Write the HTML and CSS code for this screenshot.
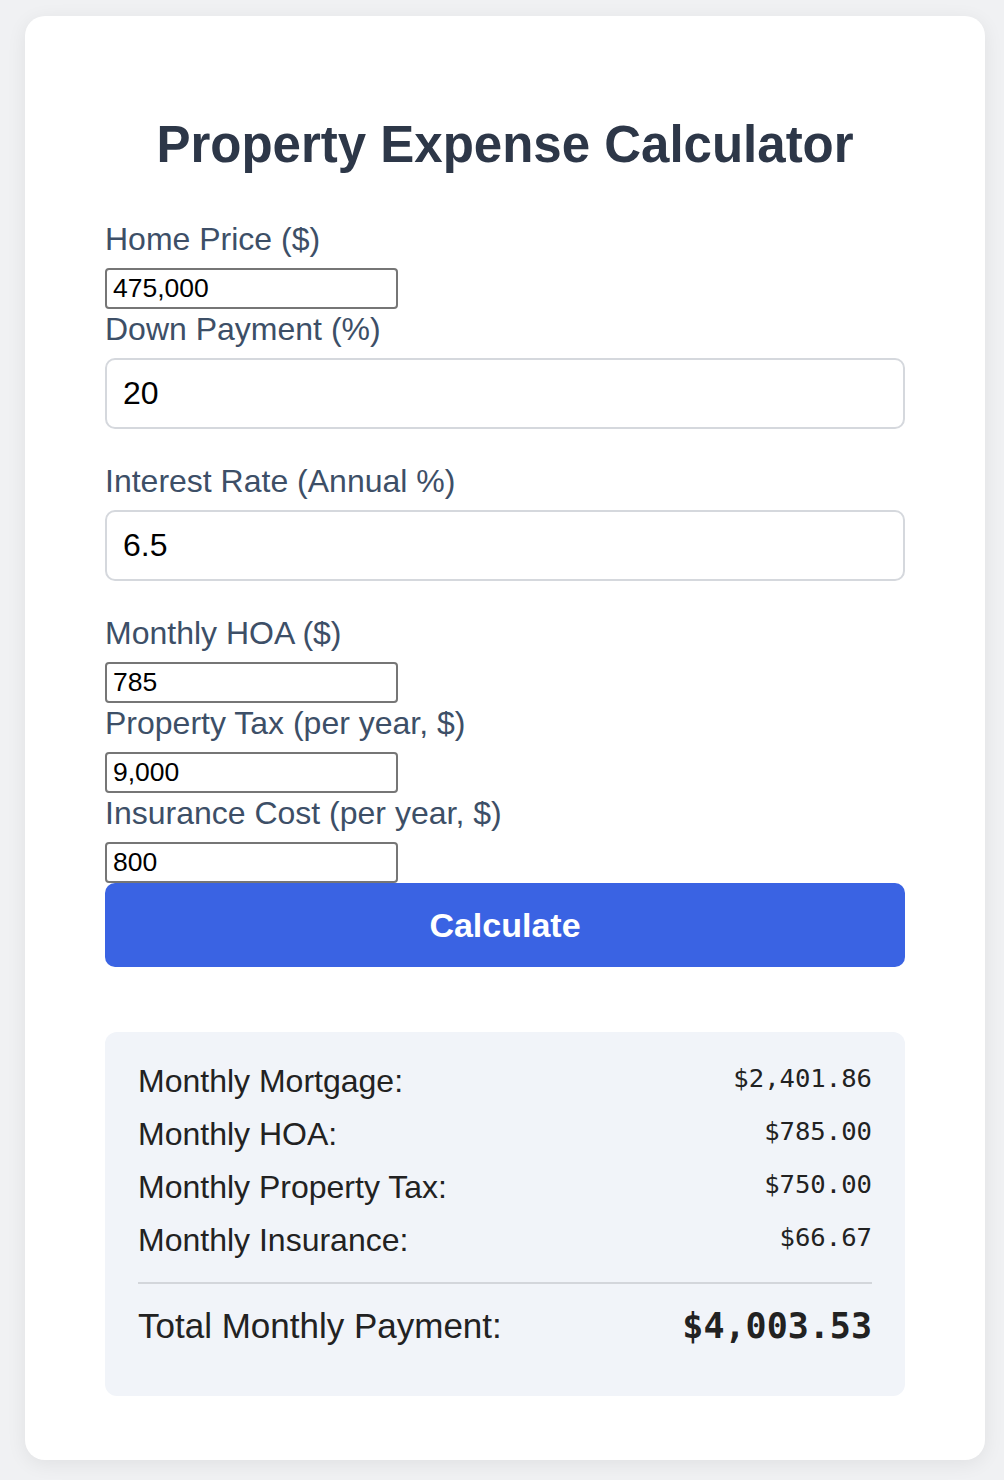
FILE: index.html
```html
<!DOCTYPE html>
<html lang="en">
<head>
<meta charset="utf-8">
<title>Property Expense Calculator</title>
<link rel="stylesheet" href="styles.css">
</head>
<body>
<main class="card">
  <h1 class="title">Property Expense Calculator</h1>
  <form class="form">
    <label class="label" for="price">Home Price ($)</label>
    <input class="plain-input" id="price" type="text" value="475,000">
    <label class="label" for="down">Down Payment (%)</label>
    <input class="styled-input" id="down" type="text" value="20">
    <label class="label" for="rate">Interest Rate (Annual %)</label>
    <input class="styled-input" id="rate" type="text" value="6.5">
    <label class="label" for="hoa">Monthly HOA ($)</label>
    <input class="plain-input" id="hoa" type="text" value="785">
    <label class="label" for="tax">Property Tax (per year, $)</label>
    <input class="plain-input" id="tax" type="text" value="9,000">
    <label class="label" for="ins">Insurance Cost (per year, $)</label>
    <input class="plain-input" id="ins" type="text" value="800">
    <button class="calc-btn" type="button">Calculate</button>
  </form>
  <section class="results">
    <div class="row"><span class="row-label">Monthly Mortgage:</span><span class="row-value">$2,401.86</span></div>
    <div class="row"><span class="row-label">Monthly HOA:</span><span class="row-value">$785.00</span></div>
    <div class="row"><span class="row-label">Monthly Property Tax:</span><span class="row-value">$750.00</span></div>
    <div class="row"><span class="row-label">Monthly Insurance:</span><span class="row-value">$66.67</span></div>
    <div class="row total"><span class="row-label">Total Monthly Payment:</span><span class="row-value">$4,003.53</span></div>
  </section>
</main>
</body>
</html>
```
FILE: styles.css
```css
html, body {
  margin: 0;
  padding: 0;
}
body {
  background: #f0f1f3;
  padding: 16px 19px 20px 25px;
  font-family: "Liberation Sans", Arial, Helvetica, sans-serif;
}
.card {
  width: 960px;
  box-sizing: border-box;
  background: #ffffff;
  border-radius: 20px;
  padding: 64px 80px 64px 80px;
  box-shadow: 0 4px 20px rgba(0, 0, 0, 0.07);
}
.title {
  margin: 34px 0 44px;
  font-size: 51px;
  line-height: 61px;
  font-weight: 700;
  text-align: center;
  color: #2d3748;
}
.form {
  display: flex;
  flex-direction: column;
  align-items: flex-start;
}
.label {
  display: block;
  font-size: 32px;
  line-height: 37px;
  color: #3d4f67;
  padding-top: 2px;
  margin-bottom: 10px;
}
.plain-input {
  box-sizing: border-box;
  width: 293px;
  height: 41px;
  margin: 0;
  padding: 2px 6px;
  border: 2px solid #767676;
  border-radius: 4px;
  font-family: "Liberation Sans", Arial, sans-serif;
  font-size: 26.5px;
  color: #000;
  background: #fff;
}
.styled-input {
  box-sizing: border-box;
  width: 100%;
  height: 71px;
  margin: 0 0 32px;
  padding: 15px 16px;
  border: 2px solid #d5d8dd;
  border-radius: 10px;
  font-family: "Liberation Sans", Arial, sans-serif;
  font-size: 32px;
  color: #000;
  background: #fff;
}
.calc-btn {
  width: 100%;
  height: 84px;
  margin: 0;
  border: none;
  border-radius: 10px;
  background: #3a63e3;
  color: #fff;
  font-family: "Liberation Sans", Arial, sans-serif;
  font-weight: 700;
  font-size: 34px;
}
.results {
  margin-top: 65px;
  background: #f1f4f9;
  border-radius: 12px;
  padding: 23px 33px 32px;
}
.row {
  display: flex;
  justify-content: space-between;
  padding: 8px 0;
}
.row-label {
  font-size: 32px;
  line-height: 37px;
  color: #222;
}
.row-value {
  font-family: "DejaVu Sans Mono", "Liberation Mono", monospace;
  font-size: 25.6px;
  line-height: 30px;
  color: #222;
}
.total {
  margin-top: 15px;
  border-top: 2px solid #d3d6db;
  padding: 22px 0 18px;
}
.total .row-label {
  font-size: 35px;
  line-height: 40px;
}
.total .row-value {
  font-size: 35px;
  line-height: 40px;
  font-weight: 700;
}
```
